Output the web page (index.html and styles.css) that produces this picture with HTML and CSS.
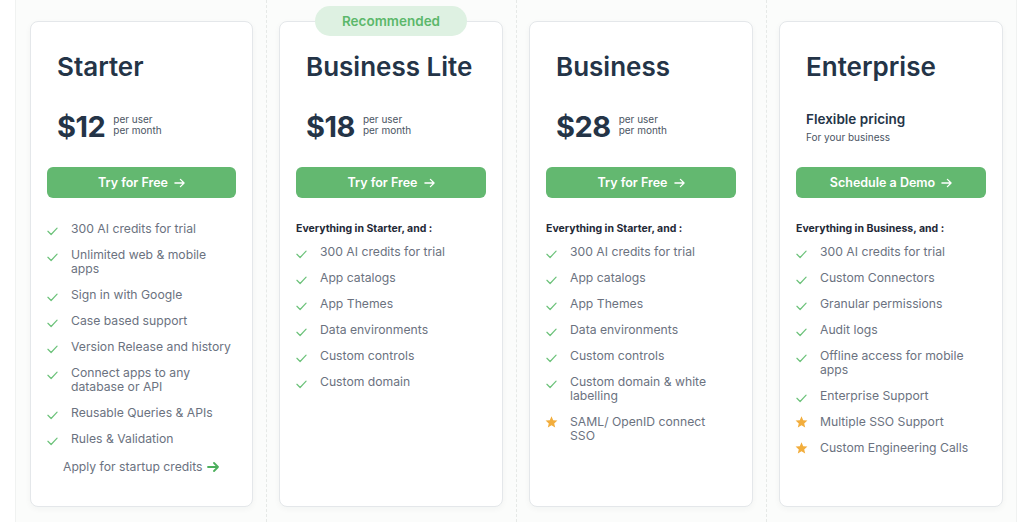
FILE: index.html
```html
<!DOCTYPE html>
<html lang="en">
<head>
<meta charset="utf-8">
<title>Pricing</title>
<link rel="stylesheet" href="styles.css">
</head>
<body>
<section class="pricing">
  <div class="col">
    <div class="card">
      <h2 class="plan">Starter</h2>
      <div class="price"><span class="amount">$12</span><span class="per">per user<br>per month</span></div>
      <a class="btn" href="#">Try for Free <svg class="arrow" viewBox="0 0 12 10"><path d="M1 5h10M7 1l4 4-4 4"/></svg></a>
      <ul class="features">
        <li><svg class="ico check" viewBox="0 0 12 9"><path d="M1 4.5l3.5 3.5L11 1"/></svg><span>300 AI credits for trial</span></li>
        <li><svg class="ico check" viewBox="0 0 12 9"><path d="M1 4.5l3.5 3.5L11 1"/></svg><span>Unlimited web &amp; mobile apps</span></li>
        <li><svg class="ico check" viewBox="0 0 12 9"><path d="M1 4.5l3.5 3.5L11 1"/></svg><span>Sign in with Google</span></li>
        <li><svg class="ico check" viewBox="0 0 12 9"><path d="M1 4.5l3.5 3.5L11 1"/></svg><span>Case based support</span></li>
        <li><svg class="ico check" viewBox="0 0 12 9"><path d="M1 4.5l3.5 3.5L11 1"/></svg><span>Version Release and history</span></li>
        <li><svg class="ico check" viewBox="0 0 12 9"><path d="M1 4.5l3.5 3.5L11 1"/></svg><span>Connect apps to any database or API</span></li>
        <li><svg class="ico check" viewBox="0 0 12 9"><path d="M1 4.5l3.5 3.5L11 1"/></svg><span>Reusable Queries &amp; APIs</span></li>
        <li><svg class="ico check" viewBox="0 0 12 9"><path d="M1 4.5l3.5 3.5L11 1"/></svg><span>Rules &amp; Validation</span></li>
      </ul>
      <a class="startup" href="#">Apply for startup credits <svg class="arrow green" viewBox="0 0 12 10"><path d="M1 5h10M7 1l4 4-4 4"/></svg></a>
    </div>
  </div>

  <div class="col">
    <div class="card">
      <div class="badge">Recommended</div>
      <h2 class="plan">Business Lite</h2>
      <div class="price"><span class="amount">$18</span><span class="per">per user<br>per month</span></div>
      <a class="btn" href="#">Try for Free <svg class="arrow" viewBox="0 0 12 10"><path d="M1 5h10M7 1l4 4-4 4"/></svg></a>
      <p class="lead">Everything in Starter, and :</p>
      <ul class="features">
        <li><svg class="ico check" viewBox="0 0 12 9"><path d="M1 4.5l3.5 3.5L11 1"/></svg><span>300 AI credits for trial</span></li>
        <li><svg class="ico check" viewBox="0 0 12 9"><path d="M1 4.5l3.5 3.5L11 1"/></svg><span>App catalogs</span></li>
        <li><svg class="ico check" viewBox="0 0 12 9"><path d="M1 4.5l3.5 3.5L11 1"/></svg><span>App Themes</span></li>
        <li><svg class="ico check" viewBox="0 0 12 9"><path d="M1 4.5l3.5 3.5L11 1"/></svg><span>Data environments</span></li>
        <li><svg class="ico check" viewBox="0 0 12 9"><path d="M1 4.5l3.5 3.5L11 1"/></svg><span>Custom controls</span></li>
        <li><svg class="ico check" viewBox="0 0 12 9"><path d="M1 4.5l3.5 3.5L11 1"/></svg><span>Custom domain</span></li>
      </ul>
    </div>
  </div>

  <div class="col">
    <div class="card">
      <h2 class="plan">Business</h2>
      <div class="price"><span class="amount">$28</span><span class="per">per user<br>per month</span></div>
      <a class="btn" href="#">Try for Free <svg class="arrow" viewBox="0 0 12 10"><path d="M1 5h10M7 1l4 4-4 4"/></svg></a>
      <p class="lead">Everything in Starter, and :</p>
      <ul class="features">
        <li><svg class="ico check" viewBox="0 0 12 9"><path d="M1 4.5l3.5 3.5L11 1"/></svg><span>300 AI credits for trial</span></li>
        <li><svg class="ico check" viewBox="0 0 12 9"><path d="M1 4.5l3.5 3.5L11 1"/></svg><span>App catalogs</span></li>
        <li><svg class="ico check" viewBox="0 0 12 9"><path d="M1 4.5l3.5 3.5L11 1"/></svg><span>App Themes</span></li>
        <li><svg class="ico check" viewBox="0 0 12 9"><path d="M1 4.5l3.5 3.5L11 1"/></svg><span>Data environments</span></li>
        <li><svg class="ico check" viewBox="0 0 12 9"><path d="M1 4.5l3.5 3.5L11 1"/></svg><span>Custom controls</span></li>
        <li><svg class="ico check" viewBox="0 0 12 9"><path d="M1 4.5l3.5 3.5L11 1"/></svg><span>Custom domain &amp; white labelling</span></li>
        <li><svg class="ico star" viewBox="0 0 24 24"><path d="M12 1.5l3.1 7.2 7.8.7-5.9 5.2 1.8 7.7L12 18.2l-6.8 4.1 1.8-7.7-5.9-5.2 7.8-.7z"/></svg><span>SAML/ OpenID connect SSO</span></li>
      </ul>
    </div>
  </div>

  <div class="col">
    <div class="card">
      <h2 class="plan">Enterprise</h2>
      <div class="flex-price"><span class="flex-title">Flexible pricing</span><span class="flex-sub">For your business</span></div>
      <a class="btn" href="#">Schedule a Demo <svg class="arrow" viewBox="0 0 12 10"><path d="M1 5h10M7 1l4 4-4 4"/></svg></a>
      <p class="lead">Everything in Business, and :</p>
      <ul class="features">
        <li><svg class="ico check" viewBox="0 0 12 9"><path d="M1 4.5l3.5 3.5L11 1"/></svg><span>300 AI credits for trial</span></li>
        <li><svg class="ico check" viewBox="0 0 12 9"><path d="M1 4.5l3.5 3.5L11 1"/></svg><span>Custom Connectors</span></li>
        <li><svg class="ico check" viewBox="0 0 12 9"><path d="M1 4.5l3.5 3.5L11 1"/></svg><span>Granular permissions</span></li>
        <li><svg class="ico check" viewBox="0 0 12 9"><path d="M1 4.5l3.5 3.5L11 1"/></svg><span>Audit logs</span></li>
        <li><svg class="ico check" viewBox="0 0 12 9"><path d="M1 4.5l3.5 3.5L11 1"/></svg><span>Offline access for mobile apps</span></li>
        <li><svg class="ico check" viewBox="0 0 12 9"><path d="M1 4.5l3.5 3.5L11 1"/></svg><span>Enterprise Support</span></li>
        <li><svg class="ico star" viewBox="0 0 24 24"><path d="M12 1.5l3.1 7.2 7.8.7-5.9 5.2 1.8 7.7L12 18.2l-6.8 4.1 1.8-7.7-5.9-5.2 7.8-.7z"/></svg><span>Multiple SSO Support</span></li>
        <li><svg class="ico star" viewBox="0 0 24 24"><path d="M12 1.5l3.1 7.2 7.8.7-5.9 5.2 1.8 7.7L12 18.2l-6.8 4.1 1.8-7.7-5.9-5.2 7.8-.7z"/></svg><span>Custom Engineering Calls</span></li>
      </ul>
    </div>
  </div>
</section>
</body>
</html>
```

FILE: styles.css
```css
* { box-sizing: border-box; }
html, body { margin: 0; padding: 0; background: #ffffff; }
body {
  font-family: "Inter", "Liberation Sans", sans-serif;
  color: #243447;
  width: 1024px;
  height: 522px;
  overflow: hidden;
}
.pricing {
  margin-left: 16px;
  width: 1000px;
  height: 522px;
  display: grid;
  grid-template-columns: repeat(4, 250px);
  background: #fbfcfb;
  box-shadow: -1px 0 0 #f0f2f1, 1px 0 0 #f0f2f1;
}
.col {
  padding: 21px 13px 15px 14px;
  display: flex;
}
.col + .col {
  border-left: 1px dashed #e6e9e7;
  padding-left: 12px;
}
.card {
  position: relative;
  flex: 1;
  background: #fff;
  border: 1px solid #e4e7ea;
  border-radius: 8px;
  box-shadow: 0 2px 6px rgba(30, 50, 40, 0.04);
  padding: 28px 16px 16px;
  display: flex;
  flex-direction: column;
}
.badge {
  position: absolute;
  top: -16px;
  left: 50%;
  transform: translateX(-50%);
  width: 152px;
  height: 30px;
  border-radius: 15px;
  background: #def1e2;
  color: #5cb86b;
  font-size: 13.5px;
  font-weight: 600;
  display: flex;
  align-items: center;
  justify-content: center;
}
.plan {
  margin: 0 0 0 10px;
  font-size: 26px;
  line-height: 34px;
  font-weight: 600;
  color: #243447;
}
.price {
  margin: 24px 0 0 10px;
  display: flex;
  align-items: center;
  gap: 8px;
  height: 36px;
}
.amount {
  font-size: 29px;
  font-weight: 700;
  letter-spacing: -0.5px;
  color: #243447;
}
.per {
  font-size: 10px;
  line-height: 11px;
  color: #4b5563;
  margin-top: -2px;
}
.flex-price {
  margin: 24px 0 0 10px;
  height: 36px;
  padding-top: 2px;
  display: flex;
  flex-direction: column;
}
.flex-title {
  font-size: 13.5px;
  font-weight: 600;
  line-height: 18px;
}
.flex-sub {
  margin-top: 2px;
  font-size: 10px;
  line-height: 14px;
  color: #4b5563;
}
.btn {
  margin-top: 23px;
  height: 31px;
  border-radius: 6px;
  background: #63b870;
  color: #fff;
  font-size: 12.5px;
  font-weight: 600;
  text-decoration: none;
  display: flex;
  align-items: center;
  justify-content: center;
  gap: 6px;
}
.arrow {
  width: 11px;
  height: 10px;
  fill: none;
  stroke: currentColor;
  stroke-width: 1.4;
  stroke-linecap: round;
  stroke-linejoin: round;
}
.arrow.green { color: #4caf5c; stroke-width: 1.8; width: 12px; }
.lead {
  margin: 24px 0 0;
  font-size: 10.5px;
  font-weight: 700;
  line-height: 14px;
  color: #1f2937;
}
.features {
  list-style: none;
  margin: 9px 0 0;
  padding: 0;
  display: flex;
  flex-direction: column;
  gap: 12px;
}
.card > .btn + .features { margin-top: 24px; }
.features li {
  display: flex;
  gap: 13px;
  font-size: 12.2px;
  line-height: 14px;
  color: #6b7280;
}
.features li span { flex: 1; padding-right: 5px; }
.ico { flex: none; width: 11px; height: 14px; }
.check {
  fill: none;
  stroke: #6cc27a;
  stroke-width: 1.3;
  stroke-linecap: round;
  stroke-linejoin: round;
}
.check path { transform: translateY(2.5px); }
.star {
  width: 13px;
  height: 14px;
  margin: 0 -1px 0 -1px;
  fill: #f2ad3c;
}
.startup {
  margin: 14px 0 0 16px;
  font-size: 12.2px;
  line-height: 14px;
  color: #6b7280;
  text-decoration: none;
  display: flex;
  align-items: center;
  gap: 5px;
}
```
